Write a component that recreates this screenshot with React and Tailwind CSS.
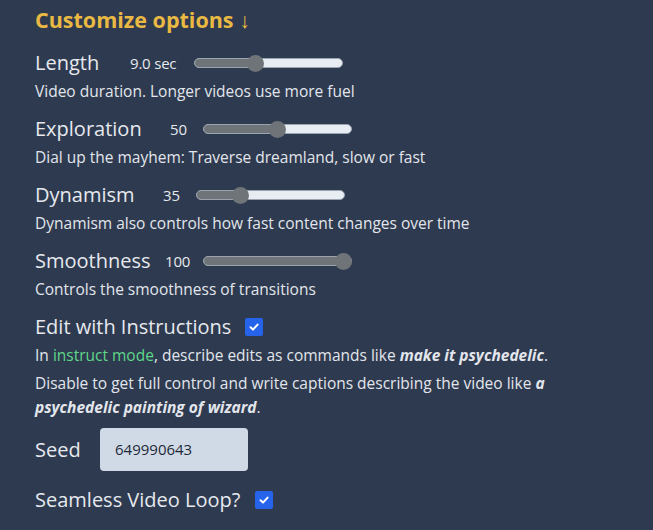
import React from "react";

function Check() {
  return (
    <span className="inline-flex items-center justify-center w-[18px] h-[18px] rounded-[2px] bg-[#2563eb]">
      <svg width="12" height="12" viewBox="0 0 12 12" fill="none">
        <path d="M2.5 6.3 L5 8.6 L9.6 3.6" stroke="white" strokeWidth="2" strokeLinecap="round" strokeLinejoin="round" />
      </svg>
    </span>
  );
}

function Slider({ pct }) {
  return (
    <div className="relative w-[149px] h-[10px] rounded-full bg-[#e8edf3] border border-[#9aa3ae]">
      <div className="absolute left-0 top-0 bottom-0 rounded-full bg-[#6f7478]" style={{ width: `${pct}%` }} />
      <div
        className="absolute top-1/2 w-[17px] h-[17px] -mt-[8.5px] -ml-[8.5px] rounded-full bg-[#6f7478]"
        style={{ left: `calc(8px + (100% - 16px) * ${pct / 100})` }}
      />
    </div>
  );
}

function Row({ label, labelW, value, valueW, pct, desc }) {
  return (
    <div className="flex flex-col">
      <div className="flex items-center h-[28px]">
        <span className="text-[20px] text-[#e6e9ee] leading-[28px]" style={{ width: labelW }}>{label}</span>
        <span className="text-[15px] text-[#e6e9ee] tracking-[-0.2px]" style={{ width: valueW }}>{value}</span>
        <Slider pct={pct} />
      </div>
      <div className="mt-[3px] text-[15.5px] leading-[22px] text-[#e2e6ec]">{desc}</div>
    </div>
  );
}

export default function App() {
  return (
    <div className="w-[653px] h-[530px] bg-[#2e3a4f] pl-[35px] pt-[6px] overflow-hidden" style={{ fontFamily: '"Open Sans", "Noto Sans", sans-serif' }}>
      <div className="text-[21.5px] font-bold leading-[28px] text-[#e9b943]">Customize options ↓</div>
      <div className="flex flex-col gap-[13px] mt-[15px]">
        <Row label="Length" labelW={95} value="9.0 sec" valueW={64} pct={40} desc="Video duration. Longer videos use more fuel" />
        <Row label="Exploration" labelW={135} value="50" valueW={33} pct={50} desc="Dial up the mayhem: Traverse dreamland, slow or fast" />
        <Row label="Dynamism" labelW={128} value="35" valueW={33} pct={27} desc="Dynamism also controls how fast content changes over time" />
        <Row label="Smoothness" labelW={130} value="100" valueW={38} pct={100} desc="Controls the smoothness of transitions" />
        <div className="flex flex-col">
          <div className="flex items-center h-[28px] gap-[14px]">
            <span className="text-[20px] text-[#e6e9ee]">Edit with Instructions</span>
            <Check />
          </div>
          <p className="mt-[2px] text-[15.5px] leading-[24px] text-[#e2e6ec]">
            In <span className="text-[#5fd68a]">instruct mode</span>, describe edits as commands like <b><i>make it psychedelic</i></b>.
          </p>
          <p className="mt-[4px] text-[15.5px] leading-[24px] text-[#e2e6ec] w-[535px]">
            Disable to get full control and write captions describing the video like <b><i>a</i></b> <b><i>psychedelic painting of wizard</i></b>.
          </p>
        </div>
      </div>
      <div className="flex items-center mt-[9px]">
        <span className="text-[20px] text-[#e6e9ee] w-[65px]">Seed</span>
        <div className="w-[148px] h-[43px] rounded-[4px] bg-[#d0dae6] flex items-center pl-[15px] text-[15px] text-[#1f2937]">649990643</div>
      </div>
      <div className="flex items-center h-[28px] gap-[15px] mt-[15px]">
        <span className="text-[20px] text-[#e6e9ee]">Seamless Video Loop?</span>
        <Check />
      </div>
    </div>
  );
}
